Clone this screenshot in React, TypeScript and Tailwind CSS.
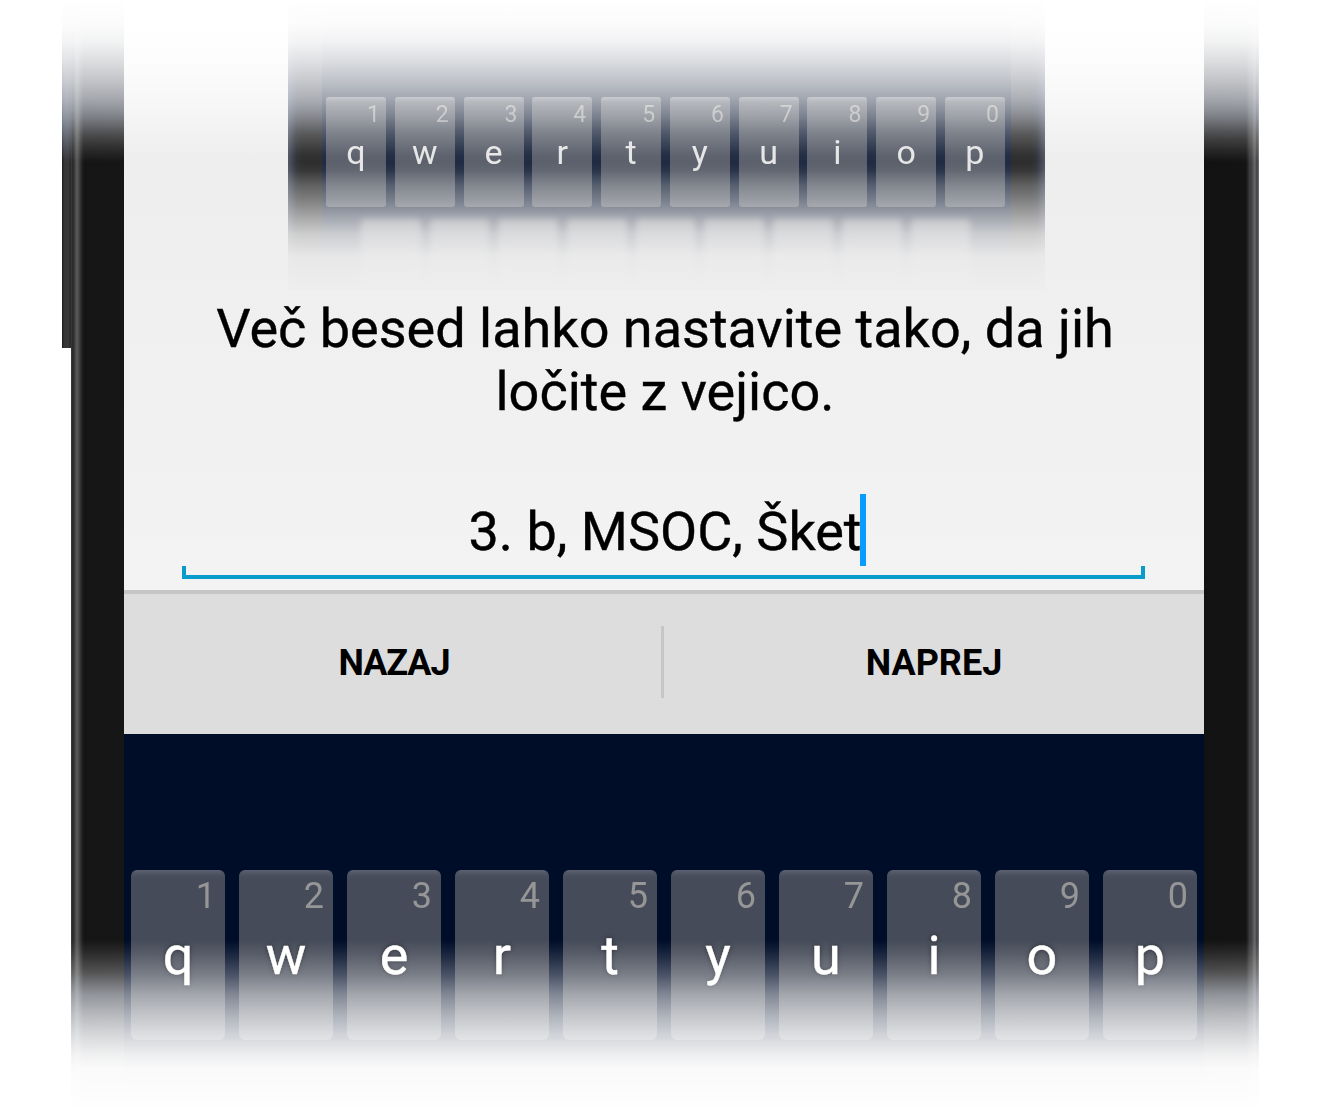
const KEYS = [
  ["q", "1"],
  ["w", "2"],
  ["e", "3"],
  ["r", "4"],
  ["t", "5"],
  ["y", "6"],
  ["u", "7"],
  ["i", "8"],
  ["o", "9"],
  ["p", "0"],
];

function PreviewEdge() {
  return (
    <div className="h-full w-[34px] bg-[linear-gradient(to_bottom,rgba(60,85,140,0.3)_0px,rgba(60,85,140,0.3)_105px,rgba(60,85,140,0)_135px)]" />
  );
}

function PreviewKeyboard() {
  return (
    <div className="relative ml-[164px] flex h-[290px] w-[757px] justify-center overflow-hidden bg-[linear-gradient(to_right,#39404f_0px,#15181f_8px,#101010_14px,#101010_743px,#15181f_749px,#39404f_757px)]">
      <PreviewEdge />
      <div className="w-[689px] bg-[#000d28] pt-[97px]">
        <div className="flex justify-between pr-[6px] pl-[4px] blur-[0.6px]">
          {KEYS.map(([letter, hint]) => (
            <div
              key={letter}
              className="flex h-[110px] w-[60px] flex-col rounded-[3px] bg-[linear-gradient(to_bottom,#666d7c_0px,#4c5260_4px,#454b58_7px)]"
            >
              <span className="mt-[5px] mr-[6px] text-right text-[23px] leading-[26px] text-[#9c9c9c]">{hint}</span>
              <span className="mt-[4px] text-center text-[34px] leading-[40px] text-[#e4e4e4]">{letter}</span>
            </div>
          ))}
        </div>
        <div className="mt-[12px] flex gap-[9px] pl-[39px] blur-[3px]">
          {KEYS.slice(0, 9).map(([letter]) => (
            <div key={letter} className="h-[80px] w-[59.7px] shrink-0 rounded-t-[4px] bg-[#6a6f7a]" />
          ))}
        </div>
      </div>
      <PreviewEdge />
      <div className="absolute inset-0 bg-[linear-gradient(to_bottom,rgba(238,238,238,0.1)_0px,rgba(238,238,238,0.1)_155px,rgba(238,238,238,0.17)_170px,rgba(238,238,238,0.36)_185px,rgba(238,238,238,0.5)_200px,rgba(238,238,238,0.68)_217px,rgba(238,238,238,0.85)_234px,rgba(238,238,238,0.97)_256px,rgba(238,238,238,0.99)_275px,rgba(238,238,238,1)_290px)]" />
    </div>
  );
}

/* Cool sheen on the bezel where it fades out at both ends. */
function BezelSheen() {
  return (
    <div className="absolute inset-0 bg-[linear-gradient(to_bottom,rgba(80,110,170,0.22)_0px,rgba(80,110,170,0.22)_108px,rgba(80,110,170,0)_140px,rgba(80,110,170,0)_970px,rgba(80,110,170,0.2)_996px,rgba(80,110,170,0.2)_1116px)]" />
  );
}

function LeftBezel() {
  return (
    <div className="flex w-[62px] shrink-0">
      <div className="h-[348px] w-[9px] bg-[linear-gradient(to_right,#17191d_0px,#343434_2px,#383838_6px,#282828_9px)]">
        <div className="h-[160px] bg-[linear-gradient(to_bottom,rgba(80,110,170,0.3)_125px,rgba(80,110,170,0)_160px)]" />
      </div>
      <div className="relative h-full flex-1 bg-[linear-gradient(to_right,#3c3d42_0px,#252525_2px,#454545_4px,#5b5b5b_6px,#454545_8px,#383838_9px,#222222_11px,#151515_13px,#161616_53px)]">
        <BezelSheen />
      </div>
    </div>
  );
}

function RightBezel() {
  return (
    <div className="relative h-full w-[55px] shrink-0 bg-[linear-gradient(to_right,#121212_0px,#141414_42px,#282828_44px,#424242_46px,#3a3a3a_47px,#555555_49px,#686868_51px,#3c3c3c_53px,#737a85_55px)]">
      <BezelSheen />
    </div>
  );
}

export default function App() {
  return (
    <div className="relative flex h-[1116px] w-[1332px] overflow-hidden bg-white pl-[62px] font-['Roboto',sans-serif]">
      <LeftBezel />
      <main className="flex h-full w-[1080px] shrink-0 flex-col">
        <section className="h-[590px] bg-linear-to-b from-[#ececec] to-[#f3f3f3]">
          <PreviewKeyboard />
          <p className="mt-[7px] pl-[2px] text-center text-[54px] leading-[63px] text-black [-webkit-text-stroke:0.4px_black]">
            Več besed lahko nastavite tako, da jih
            <br />
            ločite z vejico.
          </p>
          <div className="mx-auto mt-[71px] flex h-[72px] w-[963px] items-center justify-center pl-[6px] text-[54px] text-black [-webkit-text-stroke:0.4px_black]">
            <span className="pt-[3px] whitespace-nowrap">3. b, MSOC, Šket</span>
            <span className="-ml-[2px] h-[72px] w-[6px] bg-[#0a9bff]" />
          </div>
          <div className="ml-[58px] h-[13px] w-[963px] border-x-4 border-b-4 border-[#0a9bcd]" />
        </section>
        <nav className="flex h-[144px] items-center border-t-4 border-[#c6c6c6] bg-[#dddddd] pb-[4px] text-[36px] font-bold text-black">
          <button className="w-[537px] pt-[2px] pl-[3px] text-center tracking-[-1.1px]">NAZAJ</button>
          <span className="h-[72px] w-[3px] bg-[#c6c6c6]" />
          <button className="flex-1 pt-[2px] text-center">NAPREJ</button>
        </nav>
        <section className="h-[382px] bg-[#000d28] pt-[136px]">
          <div className="flex justify-between px-[7px] blur-[0.4px]">
            {KEYS.map(([letter, hint]) => (
              <div
                key={letter}
                className="flex h-[170px] w-[94px] flex-col rounded-[6px] bg-[linear-gradient(to_bottom,#5c6271_0px,#4a505e_5px,#454b58_9px)]"
              >
                <span className="mt-[5px] mr-[9px] text-right text-[36px] leading-[42px] text-[#969696]">{hint}</span>
                <span className="mt-[7px] text-center text-[54px] leading-[64px] text-white [-webkit-text-stroke:0.4px_white] [text-shadow:0_0_5px_rgba(0,0,0,0.6)]">
                  {letter}
                </span>
              </div>
            ))}
          </div>
        </section>
      </main>
      <RightBezel />
      <div className="absolute inset-x-0 top-0 h-[162px] bg-[linear-gradient(to_bottom,rgba(255,255,255,1)_0px,rgba(255,255,255,0.98)_25px,rgba(255,255,255,0.94)_42px,rgba(255,255,255,0.85)_60px,rgba(255,255,255,0.73)_80px,rgba(255,255,255,0.6)_98px,rgba(255,255,255,0.43)_116px,rgba(255,255,255,0.25)_132px,rgba(255,255,255,0.09)_150px,rgba(255,255,255,0)_162px)]" />
      <div className="absolute inset-x-0 bottom-0 h-[176px] bg-[linear-gradient(to_bottom,rgba(255,255,255,0)_0px,rgba(255,255,255,0.1)_14px,rgba(255,255,255,0.28)_34px,rgba(255,255,255,0.5)_54px,rgba(255,255,255,0.67)_74px,rgba(255,255,255,0.81)_94px,rgba(255,255,255,0.93)_114px,rgba(255,255,255,0.975)_128px,rgba(255,255,255,1)_172px)]" />
    </div>
  );
}
